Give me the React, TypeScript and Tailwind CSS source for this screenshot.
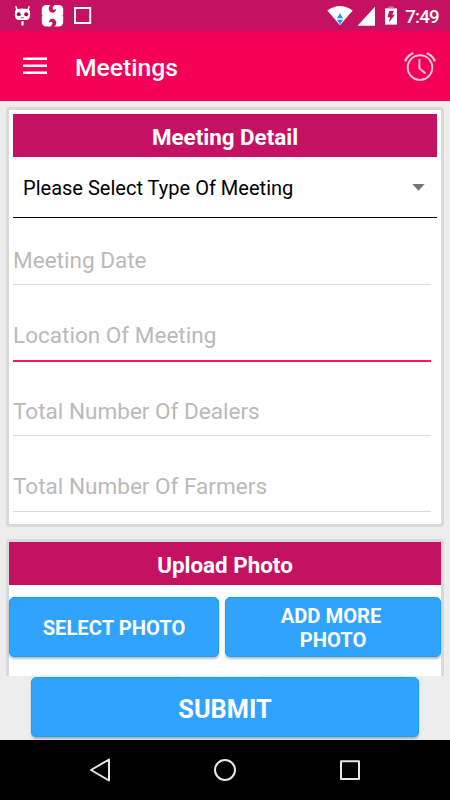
import React from "react";

function StatusBar() {
  return (
    <div className="flex h-[31px] shrink-0 bg-[#c51162]">
      <svg width="450" height="31" viewBox="0 0 450 31" fill="#fff">
        <path d="M16.2 5.8 L17.6 8.9 Q22.5 8 27.4 8.9 L28.8 5.8 L29.8 6.2 L29 9.4 Q30.3 10.5 30.2 14.5 Q29.9 19.7 26.8 20 L18.2 20 Q15.1 19.7 14.8 14.5 Q14.7 10.5 16 9.4 L15.2 6.2 Z" />
        <circle cx="18.8" cy="14.2" r="2" fill="#8d1450" />
        <circle cx="26.2" cy="14.2" r="2" fill="#8d1450" />
        <rect x="20.9" y="17.4" width="3.2" height="0.8" fill="#c51162" />
        <rect x="21.4" y="21.2" width="2.2" height="4.3" />
        <rect x="41.8" y="5" width="21.4" height="21.5" rx="4.5" />
        <path d="M50.6 4.8 C48.8 6.3 48.5 8.5 49 10 C49.7 12.3 52.2 13.2 54 12.4 C55.6 11.7 56.2 10.3 55.8 8.8 C55 10 53.7 10.1 52.9 9.2 C51.9 7.9 53 6 55.2 4.8 Z" fill="#c51162" />
        <path d="M54.4 26.7 C56.2 25.2 56.5 23 56 21.5 C55.3 19.2 52.8 18.3 51 19.1 C49.4 19.8 48.8 21.2 49.2 22.7 C50 21.5 51.3 21.4 52.1 22.3 C53.1 23.6 52 25.5 49.8 26.7 Z" fill="#c51162" />
        <path d="M41.5 14.8 L42.9 15.7 L41.5 16.6 Z M63.5 14.8 L62.1 15.7 L63.5 16.6 Z" fill="#c51162" />
        <rect x="75" y="8" width="15.2" height="15" fill="none" stroke="#fff" strokeWidth="2" />
        <path d="M327.3 10.5 Q340 1.5 352.7 10.5 L340 25.3 Z" />
        <path d="M340 13.3 L343 18.3 H337 Z M337 19.8 H343 L340 24.6 Z" fill="#2492ff" />
        <path d="M375 6.8 V25.8 H357.5 Z" />
        <path d="M388.3 6.5 H393.7 V8.5 H388.3 Z" fill="#dc70a1" />
        <path d="M385 8.4 H397 V24.6 H385 Z" />
        <path d="M389.3 11 H393.8 L392.4 14.8 H394.8 L388.8 22.4 L390 17.3 H387.4 Z" fill="#c51162" />
        <text x="405.2" y="22.8" fontSize="18.8" fontWeight="500" fontFamily="Roboto, sans-serif" textLength="34.6" lengthAdjust="spacing">7:49</text>
      </svg>
    </div>
  );
}

function Toolbar() {
  return (
    <div className="flex h-[70px] shrink-0 items-center bg-[#f50057] pl-[23px] pr-[13px] text-white">
      <svg width="24" height="18" viewBox="0 0 24 18" fill="#fff">
        <path d="M0 0.6 H24 V3 H0 Z M0 7.6 H24 V10 H0 Z M0 14.6 H24 V17 H0 Z" />
      </svg>
      <h1 className="ml-7 mt-[3px] text-[24.7px] leading-[30px] font-medium">Meetings</h1>
      <svg className="ml-auto" width="34" height="34" viewBox="0 0 34 34" fill="none" stroke="#ffc5d8" strokeWidth="2">
        <circle cx="17" cy="18.6" r="12.3" />
        <path d="M16.4 10.3 V19.2 L22.4 24.6" />
        <path d="M2 12.4 Q4.3 7 10.2 4.1 M23.8 4.1 Q29.7 7 32 12.4" strokeWidth="2.2" />
      </svg>
    </div>
  );
}

function Field({ label, active = false }: { label: string; active?: boolean }) {
  return (
    <div className="mr-[6px] h-[75.6px]">
      <div className="h-[66px] pt-[29.5px]">
        <span className="block whitespace-nowrap text-[22.55px] leading-[26px] text-[#bababa]">{label}</span>
      </div>
      <div className={active ? "h-[2px] bg-[#f5175f]" : "h-px bg-[#dadada]"} />
    </div>
  );
}

function BlueButton({ className, children }: { className: string; children: React.ReactNode }) {
  return (
    <button
      className={
        "flex h-[60px] items-center justify-center rounded-[5px] border border-[#18a0ff] bg-[#30a3ff] text-center font-bold text-white shadow-[0_2px_2px_rgba(0,0,0,0.25)] " +
        className
      }
    >
      {children}
    </button>
  );
}

export default function App() {
  return (
    <div className="flex h-[800px] w-[450px] flex-col overflow-hidden bg-[#ededed] font-[Roboto,sans-serif]">
      <StatusBar />
      <Toolbar />
      <main className="h-[575px] shrink-0 overflow-hidden px-[6px] pt-[6px]">
        <section className="h-[420px] w-[438px] rounded-[4px] border-[3px] border-[#d9d9d9] bg-white px-1 pt-1">
          <h2 className="h-[43px] bg-[#c51162] text-center text-[22.4px] leading-[46px] font-bold text-white">Meeting Detail</h2>
          <div className="flex h-[61px] items-center justify-between border-b border-black pl-[10px] pr-3">
            <span className="whitespace-nowrap pt-[2px] text-[20.05px]">Please Select Type Of Meeting</span>
            <svg width="13" height="7" viewBox="0 0 13 7" fill="#757575">
              <path d="M0.3 0 H12.7 L6.5 6.8 Z" />
            </svg>
          </div>
          <Field label="Meeting Date" />
          <Field label="Location Of Meeting" active />
          <Field label="Total Number Of Dealers" />
          <Field label="Total Number Of Farmers" />
        </section>
        <section className="mt-[12px] h-[220px] w-[438px] rounded-[4px] border-[3px] border-[#d9d9d9] bg-white">
          <h2 className="h-[43px] bg-[#c51162] text-center text-[22.4px] leading-[46px] font-bold text-white">Upload Photo</h2>
          <div className="mt-3 flex gap-[6px]">
            <BlueButton className="w-[210px] pt-[2px] text-[20.2px]">SELECT PHOTO</BlueButton>
            <BlueButton className="w-[216px] pr-[4px] pt-[2px] text-[20.2px] leading-[24px]">
              <span>
                ADD MORE
                <br />
                <span className="pl-1">PHOTO</span>
              </span>
            </BlueButton>
          </div>
          <div className="mt-[18px] flex justify-between pl-8 pr-9">
            <span className="h-px w-[140px] bg-[#f1f1f1]" />
            <span className="h-px w-[145px] bg-[#f1f1f1]" />
          </div>
        </section>
      </main>
      <div className="h-[64px] shrink-0 overflow-hidden pl-[31px] pt-px">
        <BlueButton className="w-[388px] pt-[5px] text-[25.3px]">SUBMIT</BlueButton>
      </div>
      <nav className="h-[60px] shrink-0 bg-black">
        <svg width="450" height="60" viewBox="0 0 450 60" fill="none" stroke="#e6e6e6" strokeWidth="2" strokeLinejoin="round">
          <path d="M109 19.5 V40.5 L91 30 Z" />
          <circle cx="225" cy="30" r="10" />
          <rect x="341" y="21.3" width="18" height="17.6" />
        </svg>
      </nav>
    </div>
  );
}
